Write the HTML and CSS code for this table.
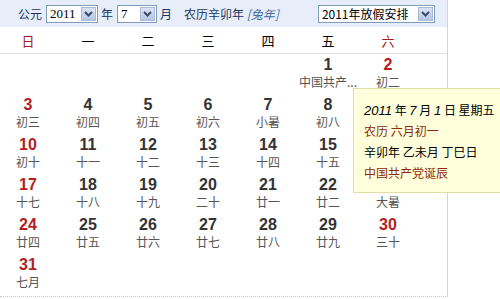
FILE: index.html
```html
<!DOCTYPE html>
<html>
<head>
<meta charset="utf-8">
<link rel="stylesheet" href="styles.css">
</head>
<body>
<div class="cal">
  <div class="toolbar">
    <span class="lbl">公元</span>
    <div class="sel sel-year"><span class="val serif">2011</span><span class="btn"><svg width="9" height="6" viewBox="0 0 9 6"><path d="M1 1 L4.5 4.5 L8 1" fill="none" stroke="#3a4a6a" stroke-width="2"/></svg></span></div>
    <span class="lbl">年</span>
    <div class="sel sel-month"><span class="val serif">7</span><span class="btn"><svg width="9" height="6" viewBox="0 0 9 6"><path d="M1 1 L4.5 4.5 L8 1" fill="none" stroke="#3a4a6a" stroke-width="2"/></svg></span></div>
    <span class="lbl">月</span>
    <span class="lbl lunar-year">农历辛卯年 <i class="zodiac">[兔年]</i></span>
    <div class="sel sel-holiday"><span class="val">2011年放假安排</span><span class="btn"><svg width="9" height="6" viewBox="0 0 9 6"><path d="M1 1 L4.5 4.5 L8 1" fill="none" stroke="#3a4a6a" stroke-width="2"/></svg></span></div>
  </div>
  <div class="weekdays">
    <div class="wk red">日</div><div class="wk">一</div><div class="wk">二</div><div class="wk">三</div><div class="wk">四</div><div class="wk">五</div><div class="wk red">六</div>
  </div>
  <div class="grid">
    <div class="cell"></div><div class="cell"></div><div class="cell"></div><div class="cell"></div><div class="cell"></div>
    <div class="cell"><b class="num">1</b><span class="lu">中国共产...</span></div>
    <div class="cell"><b class="num red">2</b><span class="lu">初二</span></div>
    <div class="cell"><b class="num red">3</b><span class="lu">初三</span></div>
    <div class="cell"><b class="num">4</b><span class="lu">初四</span></div>
    <div class="cell"><b class="num">5</b><span class="lu">初五</span></div>
    <div class="cell"><b class="num">6</b><span class="lu">初六</span></div>
    <div class="cell"><b class="num">7</b><span class="lu">小暑</span></div>
    <div class="cell"><b class="num">8</b><span class="lu">初八</span></div>
    <div class="cell"><b class="num red">9</b><span class="lu">初九</span></div>
    <div class="cell"><b class="num red">10</b><span class="lu">初十</span></div>
    <div class="cell"><b class="num">11</b><span class="lu">十一</span></div>
    <div class="cell"><b class="num">12</b><span class="lu">十二</span></div>
    <div class="cell"><b class="num">13</b><span class="lu">十三</span></div>
    <div class="cell"><b class="num">14</b><span class="lu">十四</span></div>
    <div class="cell"><b class="num">15</b><span class="lu">十五</span></div>
    <div class="cell"><b class="num red">16</b><span class="lu">十六</span></div>
    <div class="cell"><b class="num red">17</b><span class="lu">十七</span></div>
    <div class="cell"><b class="num">18</b><span class="lu">十八</span></div>
    <div class="cell"><b class="num">19</b><span class="lu">十九</span></div>
    <div class="cell"><b class="num">20</b><span class="lu">二十</span></div>
    <div class="cell"><b class="num">21</b><span class="lu">廿一</span></div>
    <div class="cell"><b class="num">22</b><span class="lu">廿二</span></div>
    <div class="cell"><b class="num red">23</b><span class="lu">大暑</span></div>
    <div class="cell"><b class="num red">24</b><span class="lu">廿四</span></div>
    <div class="cell"><b class="num">25</b><span class="lu">廿五</span></div>
    <div class="cell"><b class="num">26</b><span class="lu">廿六</span></div>
    <div class="cell"><b class="num">27</b><span class="lu">廿七</span></div>
    <div class="cell"><b class="num">28</b><span class="lu">廿八</span></div>
    <div class="cell"><b class="num">29</b><span class="lu">廿九</span></div>
    <div class="cell"><b class="num red">30</b><span class="lu">三十</span></div>
    <div class="cell"><b class="num red">31</b><span class="lu">七月</span></div>
  </div>
</div>
<div class="tip">
  <div class="tl"><i>2011</i> 年 <i>7</i> 月 <i>1</i> 日 星期五</div>
  <div class="tl dark-red">农历 六月初一</div>
  <div class="tl">辛卯年 乙未月 丁巳日</div>
  <div class="tl dark-red">中国共产党诞辰</div>
</div>
</body>
</html>
```
FILE: styles.css
```css
html, body {
  margin: 0;
  padding: 0;
  background: #fff;
  width: 500px;
  height: 299px;
  overflow: hidden;
  font-family: "Noto Sans CJK SC", "Liberation Sans", sans-serif;
}
.cal {
  width: 448px;
  height: 297px;
  border-right: 1px solid #c9d5e3;
  border-bottom: 1px dotted #c4c8cc;
  box-sizing: border-box;
}
.toolbar {
  height: 27px;
  background: #e7eef9;
  display: flex;
  align-items: center;
  padding-left: 18px;
  font-size: 12px;
  color: #1d3561;
  box-sizing: border-box;
}
.lbl { line-height: 14px; margin-right: 4px; }
.sel {
  height: 18px;
  border: 1px solid #7f9db9;
  background: #fff;
  box-sizing: border-box;
  display: flex;
  align-items: center;
  justify-content: space-between;
  margin-right: 3px;
  color: #000;
  font-size: 12px;
}
.sel .val { padding-left: 3px; line-height: 14px; }
.serif { font-family: "Liberation Serif", serif; font-size: 13px; }
.btn {
  width: 15px;
  height: 14px;
  margin-right: 1px;
  background: linear-gradient(#dbe3f5, #b8c6e4);
  border: 1px solid #a9b9d8;
  box-sizing: border-box;
  display: flex;
  align-items: center;
  justify-content: center;
}
.sel-year { width: 52px; }
.sel-month { width: 40px; margin-left: 0; }
.lunar-year { margin-left: 8px; margin-right: 39px; }
.zodiac { color: #4a6a9e; font-style: italic; }
.sel-holiday { width: 117px; height: 18px; }
.weekdays {
  display: grid;
  grid-template-columns: repeat(7, 56px);
  column-gap: 4px;
  height: 26px;
  border-bottom: 1px solid #e2e2e2;
  align-items: center;
}
.wk { text-align: center; font-size: 13px; color: #000; }
.wk.red { color: #a01d1d; }
.grid {
  display: grid;
  grid-template-columns: repeat(7, 56px);
  column-gap: 4px;
  grid-auto-rows: 40px;
  padding-top: 2px;
}
.cell {
  display: flex;
  flex-direction: column;
  align-items: center;
}
.num {
  font-family: "Liberation Sans", Arial, sans-serif;
  font-weight: bold;
  font-size: 16px;
  line-height: 18px;
  color: #333;
}
.num.red { color: #b41d1d; }
.lu {
  font-size: 12px;
  line-height: 15px;
  color: #555;
  white-space: nowrap;
}
.tip {
  position: absolute;
  left: 353px;
  top: 88px;
  width: 160px;
  height: 105px;
  background: #ffffdc;
  border: 1px solid #e2dca6;
  box-sizing: border-box;
  padding: 10px 0 0 10px;
  font-size: 12px;
  color: #000;
}
.tl { height: 21px; line-height: 21px; white-space: nowrap; }
.tl i { font-family: "Liberation Sans", Arial, sans-serif; font-size: 13px; }
.dark-red { color: #8d2a0a; }
```
